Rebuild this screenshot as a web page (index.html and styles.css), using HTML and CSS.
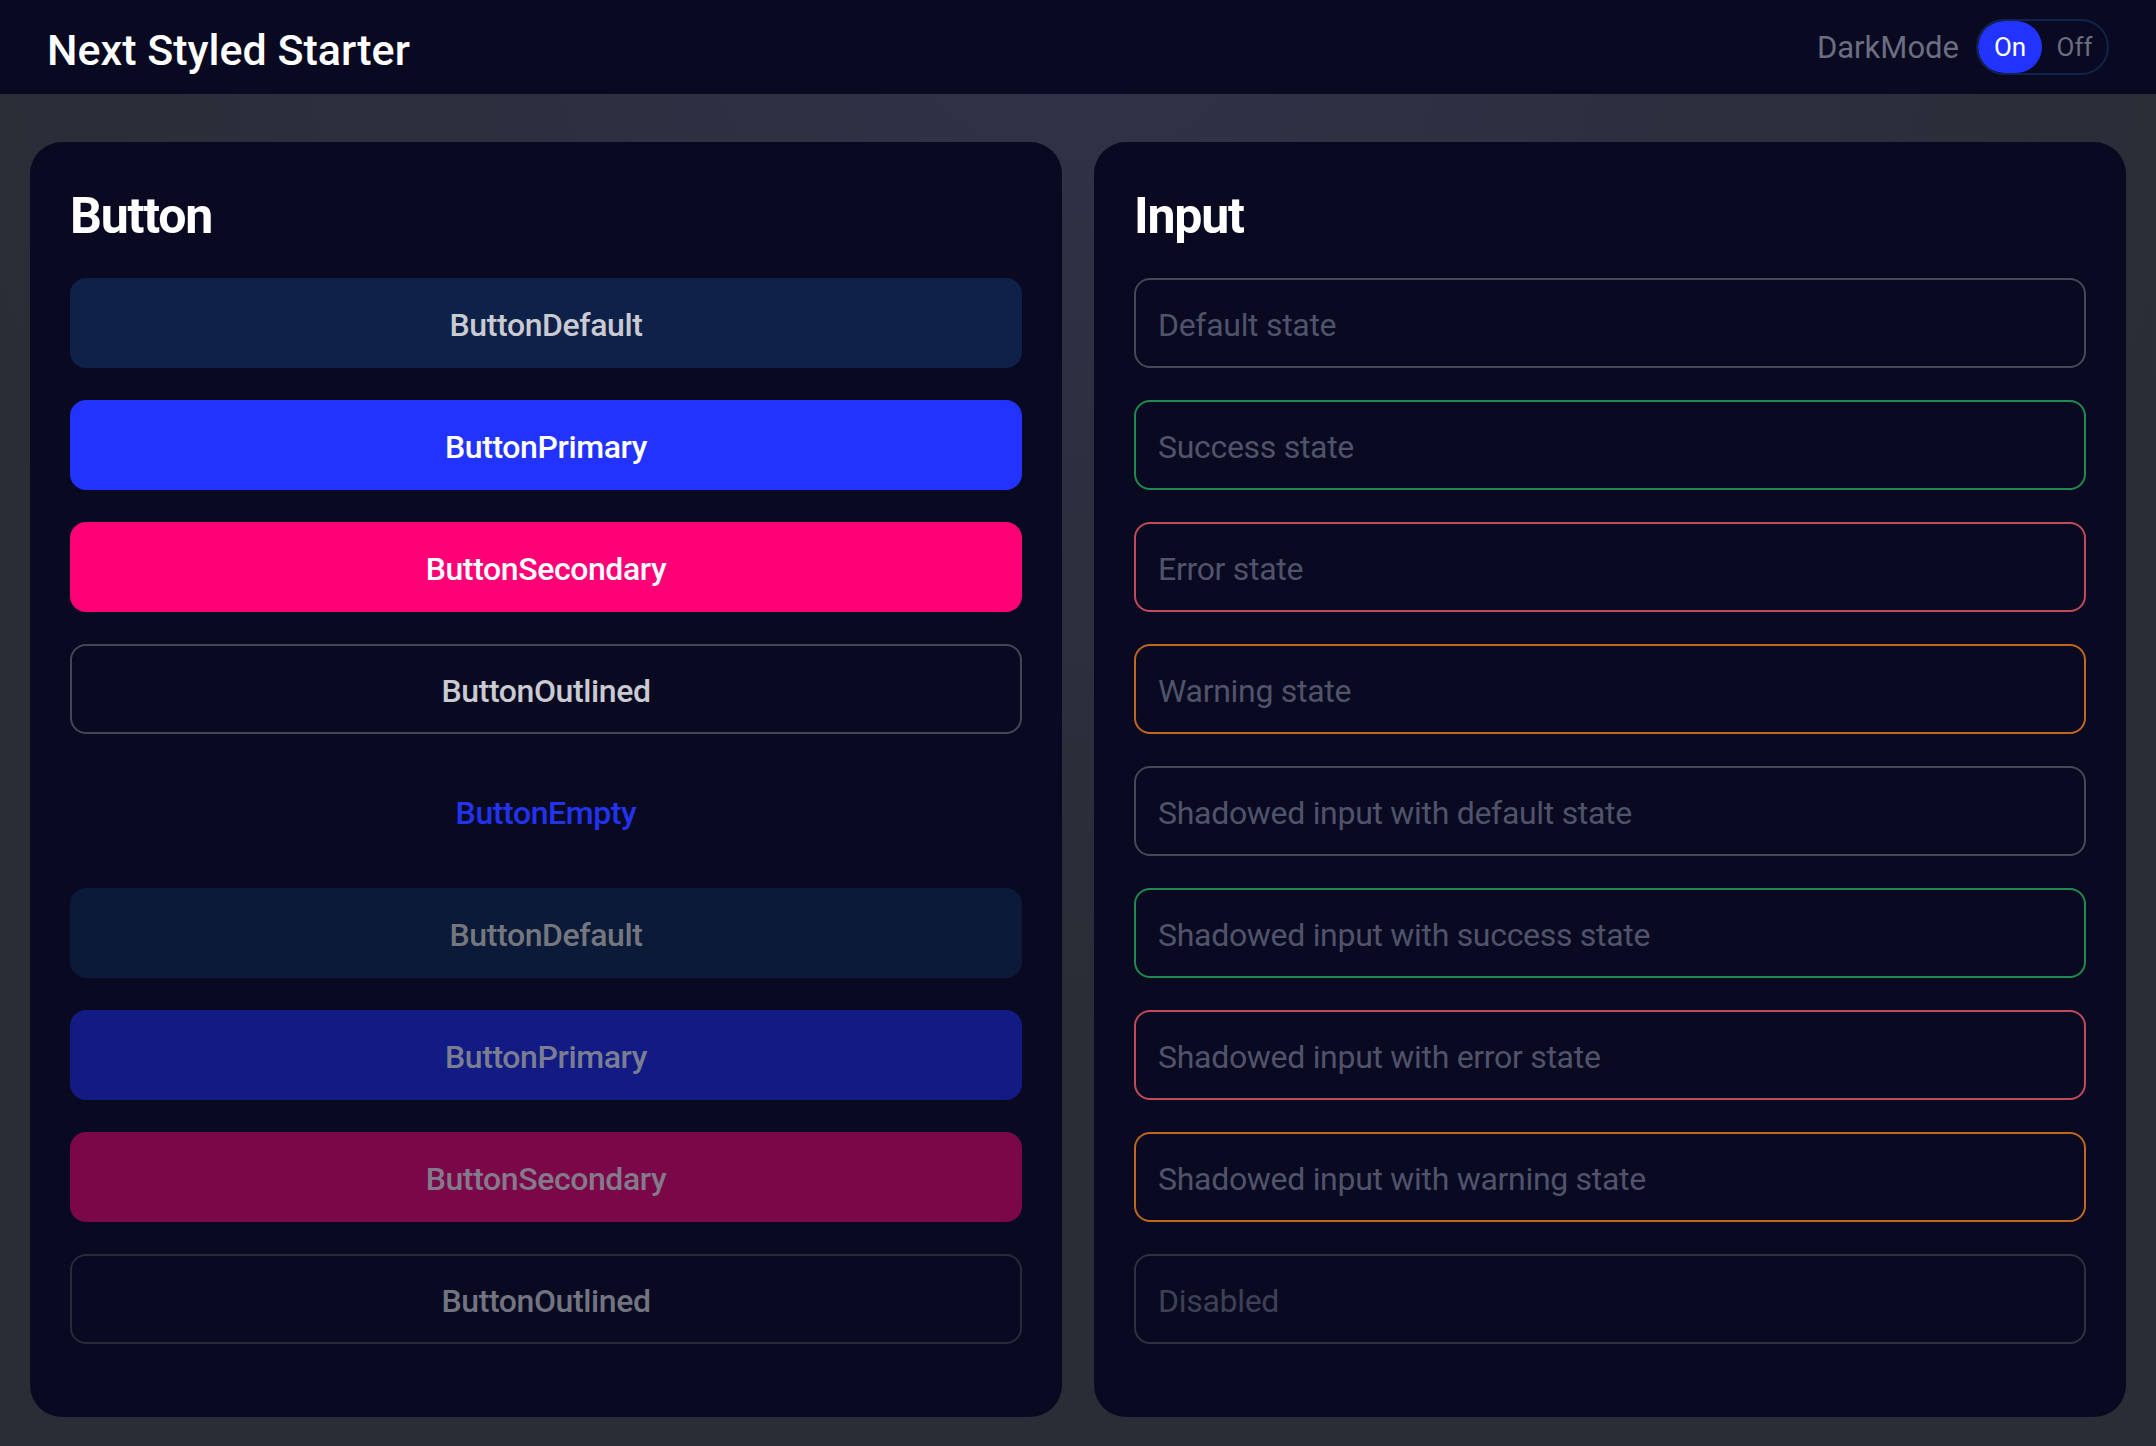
FILE: index.html
```html
<!DOCTYPE html>
<html lang="en">
<head>
<meta charset="utf-8">
<title>Next Styled Starter</title>
<link rel="stylesheet" href="styles.css">
</head>
<body>
<header class="topbar">
  <h1 class="brand">Next Styled Starter</h1>
  <div class="mode">
    <span class="mode-label">DarkMode</span>
    <div class="toggle">
      <span class="toggle-opt is-active">On</span>
      <span class="toggle-opt">Off</span>
    </div>
  </div>
</header>
<main class="page">
  <section class="panel">
    <h2 class="panel-title">Button</h2>
    <button class="btn btn-default">ButtonDefault</button>
    <button class="btn btn-primary">ButtonPrimary</button>
    <button class="btn btn-secondary">ButtonSecondary</button>
    <button class="btn btn-outlined">ButtonOutlined</button>
    <button class="btn btn-empty">ButtonEmpty</button>
    <button class="btn btn-default is-disabled" disabled>ButtonDefault</button>
    <button class="btn btn-primary is-disabled" disabled>ButtonPrimary</button>
    <button class="btn btn-secondary is-disabled" disabled>ButtonSecondary</button>
    <button class="btn btn-outlined is-disabled" disabled>ButtonOutlined</button>
  </section>
  <section class="panel">
    <h2 class="panel-title">Input</h2>
    <input class="field" type="text" placeholder="Default state">
    <input class="field field-success" type="text" placeholder="Success state">
    <input class="field field-error" type="text" placeholder="Error state">
    <input class="field field-warning" type="text" placeholder="Warning state">
    <input class="field field-shadow" type="text" placeholder="Shadowed input with default state">
    <input class="field field-shadow field-success" type="text" placeholder="Shadowed input with success state">
    <input class="field field-shadow field-error" type="text" placeholder="Shadowed input with error state">
    <input class="field field-shadow field-warning" type="text" placeholder="Shadowed input with warning state">
    <input class="field field-disabled" type="text" placeholder="Disabled" disabled>
  </section>
</main>
</body>
</html>
```

FILE: styles.css
```css
* { box-sizing: border-box; }

html, body {
  margin: 0;
  padding: 0;
}

body {
  font-family: Roboto, "Liberation Sans", Arial, sans-serif;
  background: radial-gradient(ellipse 70% 90% at 50% 0%, #30324a 0%, #2c2f3d 45%, #2a2d35 80%);
  background-color: #2a2d35;
  min-height: 1446px;
  color: #ffffff;
}

.topbar {
  height: 94px;
  background: #090a21;
  display: flex;
  align-items: center;
  justify-content: space-between;
  padding: 0 47px 0 47px;
}

.brand {
  margin: 5px 0 0;
  font-size: 43px;
  font-weight: 500;
  color: #ffffff;
}

.mode {
  display: flex;
  align-items: center;
  gap: 17px;
}

.mode-label {
  font-size: 31px;
  color: #6b6e81;
}

.toggle {
  display: flex;
  align-items: center;
  height: 56px;
  width: 133px;
  border: 2px solid #12244a;
  border-radius: 28px;
  overflow: hidden;
}

.toggle-opt {
  flex: 1;
  height: 52px;
  display: flex;
  align-items: center;
  justify-content: center;
  font-size: 26px;
  color: #6b6e81;
  border-radius: 26px;
}

.toggle-opt.is-active {
  flex: 0 0 64px;
  background: #2233ff;
  color: #ffffff;
}

.page {
  display: grid;
  grid-template-columns: 1fr 1fr;
  gap: 32px;
  padding: 48px 30px 30px;
}

.panel {
  background: #090a21;
  border-radius: 32px;
  padding: 44px 40px 41px;
  display: flex;
  flex-direction: column;
}

.panel-title {
  margin: 0 0 32px;
  font-size: 50px;
  line-height: 60px;
  font-weight: 700;
  letter-spacing: -1.2px;
  color: #ffffff;
}

.btn {
  display: block;
  width: 100%;
  height: 90px;
  margin: 0 0 32px;
  border: 0;
  border-radius: 16px;
  font-family: Roboto, "Liberation Sans", Arial, sans-serif;
  font-size: 32px;
  font-weight: 500;
  letter-spacing: -0.4px;
  cursor: pointer;
  padding: 3px 0 0;
}

.btn-default { background: #0e2148; color: #c9cad2; }
.btn-primary { background: #2233ff; color: #ffffff; }
.btn-secondary { background: #ff0077; color: #ffffff; }
.btn-outlined { background: transparent; color: #c9cad2; border: 2px solid #43465a; }
.btn-empty { background: transparent; color: #2233ee; }

.btn-default.is-disabled { background: #0a1a38; color: #75777f; }
.btn-primary.is-disabled { background: #121a83; color: #7b7d92; }
.btn-secondary.is-disabled { background: #7a0848; color: #857a8c; }
.btn-outlined.is-disabled { background: transparent; color: #727480; border-color: #272a3b; }

.btn:last-child { margin-bottom: 32px; }

.field {
  display: block;
  width: 100%;
  height: 90px;
  margin: 0 0 32px;
  padding: 3px 22px 0;
  background: transparent;
  border: 2px solid #45475a;
  border-radius: 16px;
  font-family: Roboto, "Liberation Sans", Arial, sans-serif;
  font-size: 32px;
  letter-spacing: -0.3px;
  color: #c9cad2;
  outline: none;
}

.field::placeholder { color: #50536a; opacity: 1; }

.field-success { border-color: #1f8a4d; }
.field-error { border-color: #c0495a; }
.field-warning { border-color: #c0661f; }

.field-disabled { border-color: #2e3043; }
.field-disabled::placeholder { color: #3e4054; }
```
